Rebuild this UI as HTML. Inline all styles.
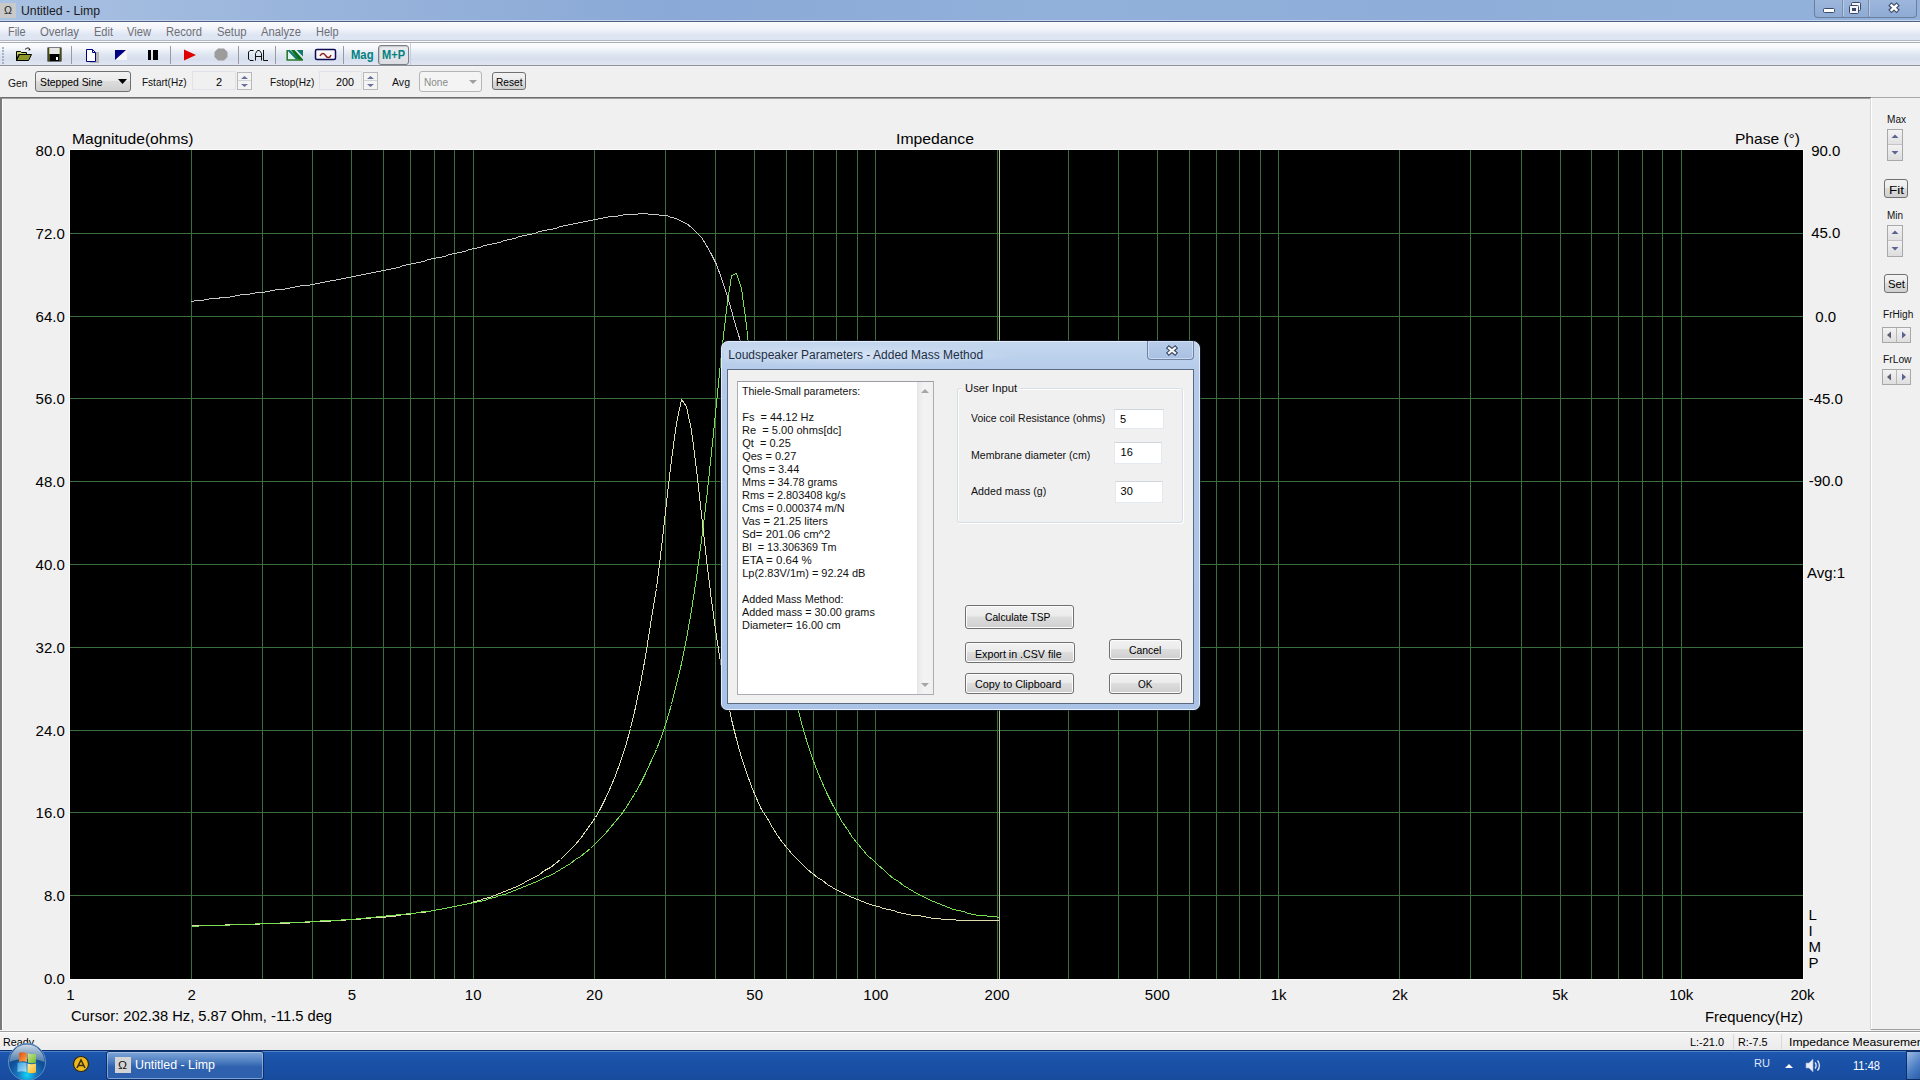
<!DOCTYPE html><html><head><meta charset="utf-8"><title>Untitled - Limp</title><style>
html,body{margin:0;padding:0;width:1920px;height:1080px;overflow:hidden;background:#f0f0f0;font-family:"Liberation Sans",sans-serif;}
div{box-sizing:border-box;}
</style></head><body>
<div style="position:absolute;left:0px;top:0px;width:1920px;height:20px;background:linear-gradient(90deg,#a9c1e2 0%,#9ab5dc 15%,#8aa9d6 35%,#91b0da 55%,#8eadd8 75%,#93b2db 100%)"></div>
<div style="position:absolute;left:0px;top:20px;width:1920px;height:1px;background:#c6d6ee"></div>
<div style="position:absolute;left:0px;top:21px;width:1920px;height:1px;background:#4f6183"></div>
<div style="position:absolute;left:0px;top:3px;width:16px;height:15px;background:#c9c9c9"></div>
<div style="position:absolute;left:4.00px;top:5.00px;font-size:11px;line-height:11px;font-family:'Liberation Sans',sans-serif;color:#222;white-space:pre;transform:scaleX(0.9728);transform-origin:0 0;">Ω</div>
<div style="position:absolute;left:21.00px;top:5.00px;font-size:12px;line-height:12px;font-family:'Liberation Sans',sans-serif;color:#1b1b1b;white-space:pre;transform:scaleX(1.0212);transform-origin:0 0;">Untitled - Limp</div>
<div style="position:absolute;left:1814px;top:0px;width:103px;height:18px;border:1px solid #6c7e9c;border-top:none;border-radius:0 0 4px 4px;background:linear-gradient(#9db7dc,#8eabd5)"></div>
<div style="position:absolute;left:1842px;top:0px;width:1px;height:17px;background:#7c8ea8"></div>
<div style="position:absolute;left:1843px;top:0px;width:1px;height:16px;background:#b8cae4"></div>
<div style="position:absolute;left:1868px;top:0px;width:1px;height:17px;background:#7c8ea8"></div>
<div style="position:absolute;left:1869px;top:0px;width:1px;height:16px;background:#b8cae4"></div>
<svg style="position:absolute;left:1814px;top:0px" width="106" height="17" viewBox="0 0 106 17">
<rect x="9.5" y="8.5" width="11" height="4" rx="1" fill="#fff" stroke="#3b4a66" stroke-width="1"/>
<rect x="37.5" y="2.5" width="9" height="8" rx="1" fill="#f4f6fa" stroke="#3b4a66" stroke-width="1"/>
<rect x="35.5" y="5.5" width="9" height="8" rx="1" fill="#f4f6fa" stroke="#3b4a66" stroke-width="1"/>
<rect x="38" y="8" width="4" height="3" fill="#3b4a66"/>
<path d="M77.5 5.5l5 4.5M82.5 5.5l-5 4.5" stroke="#3b4a66" stroke-width="4.6" stroke-linecap="square"/>
<path d="M77.5 5.5l5 4.5M82.5 5.5l-5 4.5" stroke="#fff" stroke-width="2.4" stroke-linecap="square"/>
</svg>
<div style="position:absolute;left:0px;top:22px;width:1920px;height:18px;background:linear-gradient(#fbfbfd 0%,#f3f5fa 35%,#dfe6f3 70%,#dde4f2 100%)"></div>
<div style="position:absolute;left:0px;top:40px;width:1920px;height:1px;background:#b4b8c2"></div>
<div style="position:absolute;left:0px;top:41px;width:1920px;height:1px;background:#fbfbfd"></div>
<div style="position:absolute;left:0px;top:42px;width:1920px;height:1px;background:#a9adb6"></div>
<div style="position:absolute;left:7.60px;top:26.00px;font-size:12px;line-height:12px;font-family:'Liberation Sans',sans-serif;color:#6d6f76;white-space:pre;transform:scaleX(0.9050);transform-origin:0 0;">File</div>
<div style="position:absolute;left:39.80px;top:26.00px;font-size:12px;line-height:12px;font-family:'Liberation Sans',sans-serif;color:#6d6f76;white-space:pre;transform:scaleX(0.9433);transform-origin:0 0;">Overlay</div>
<div style="position:absolute;left:93.50px;top:26.00px;font-size:12px;line-height:12px;font-family:'Liberation Sans',sans-serif;color:#6d6f76;white-space:pre;transform:scaleX(0.9188);transform-origin:0 0;">Edit</div>
<div style="position:absolute;left:127.30px;top:26.00px;font-size:12px;line-height:12px;font-family:'Liberation Sans',sans-serif;color:#6d6f76;white-space:pre;transform:scaleX(0.9304);transform-origin:0 0;">View</div>
<div style="position:absolute;left:166.00px;top:26.00px;font-size:12px;line-height:12px;font-family:'Liberation Sans',sans-serif;color:#6d6f76;white-space:pre;transform:scaleX(0.9306);transform-origin:0 0;">Record</div>
<div style="position:absolute;left:217.00px;top:26.00px;font-size:12px;line-height:12px;font-family:'Liberation Sans',sans-serif;color:#6d6f76;white-space:pre;transform:scaleX(0.9407);transform-origin:0 0;">Setup</div>
<div style="position:absolute;left:261.00px;top:26.00px;font-size:12px;line-height:12px;font-family:'Liberation Sans',sans-serif;color:#6d6f76;white-space:pre;transform:scaleX(0.9369);transform-origin:0 0;">Analyze</div>
<div style="position:absolute;left:316.00px;top:26.00px;font-size:12px;line-height:12px;font-family:'Liberation Sans',sans-serif;color:#6d6f76;white-space:pre;transform:scaleX(0.9116);transform-origin:0 0;">Help</div>
<div style="position:absolute;left:0px;top:43px;width:1920px;height:22px;background:linear-gradient(#fdfdfe 0%,#f6f8fb 20%,#dde5f1 55%,#d7dfee 75%,#e2e6f3 100%)"></div>
<div style="position:absolute;left:0px;top:65px;width:1920px;height:1px;background:#8f9199"></div>
<div style="position:absolute;left:0px;top:66px;width:1920px;height:1px;background:#f4f4f4"></div>
<div style="position:absolute;left:2px;top:47px;width:2px;height:2px;background:#a7b3c6"></div>
<div style="position:absolute;left:2px;top:50px;width:2px;height:2px;background:#a7b3c6"></div>
<div style="position:absolute;left:2px;top:53px;width:2px;height:2px;background:#a7b3c6"></div>
<div style="position:absolute;left:2px;top:56px;width:2px;height:2px;background:#a7b3c6"></div>
<div style="position:absolute;left:2px;top:59px;width:2px;height:2px;background:#a7b3c6"></div>
<div style="position:absolute;left:2px;top:62px;width:2px;height:2px;background:#a7b3c6"></div>
<svg style="position:absolute;left:15px;top:46px" width="18" height="16" viewBox="0 0 18 16">
<path d="M1.5 5.5h4l1 1h5v2h-8l-2 6z" fill="#c8d060" stroke="#000" stroke-width="1"/>
<path d="M1.5 14.5l3-6h12l-3 6z" fill="#8c9628" stroke="#000" stroke-width="1"/>
<path d="M10 3.5c2-2 4-2 5 0" fill="none" stroke="#000" stroke-width="1"/><path d="M14 2.5l1.5 1.5l-2 0.5z" fill="#000"/>
</svg>
<svg style="position:absolute;left:47px;top:47px" width="15" height="15" viewBox="0 0 15 15">
<rect x="0.5" y="0.5" width="14" height="14" fill="#000"/><rect x="3" y="1" width="9" height="6" fill="#8c9628"/>
<rect x="2" y="1" width="11" height="6" fill="#e6e6e6"/><rect x="3" y="9" width="9" height="5" fill="#000"/><rect x="9" y="10" width="2" height="3" fill="#fff"/>
<rect x="1.5" y="1" width="1" height="13" fill="#8c9628"/><rect x="12.5" y="1" width="1" height="13" fill="#8c9628"/>
</svg>
<div style="position:absolute;left:71px;top:46px;width:1px;height:18px;background:#9a9aa0"></div>
<svg style="position:absolute;left:85px;top:48px" width="16" height="15" viewBox="0 0 16 15">
<rect x="5" y="4" width="9" height="11" fill="#b4b4b4"/>
<path d="M1.5 1.5h6l3 3v9h-9z" fill="#fff" stroke="#000080" stroke-width="1"/><path d="M7.5 1.5v3h3" fill="none" stroke="#000080"/>
</svg>
<svg style="position:absolute;left:114px;top:49px" width="14" height="12" viewBox="0 0 14 12">
<rect x="2" y="1" width="11" height="10" fill="#f6f6f6"/><path d="M1 1h11l-11 10z" fill="#000080"/></svg>
<div style="position:absolute;left:148px;top:50px;width:3px;height:10px;background:#000"></div>
<div style="position:absolute;left:153px;top:50px;width:5px;height:10px;background:#000"></div>
<div style="position:absolute;left:170px;top:46px;width:1px;height:18px;background:#9a9aa0"></div>
<svg style="position:absolute;left:183px;top:49px" width="14" height="12" viewBox="0 0 14 12"><path d="M1 0.5L13 6L1 11.5z" fill="#e00000"/></svg>
<svg style="position:absolute;left:214px;top:48px" width="14" height="13" viewBox="0 0 14 13"><path d="M4 0.5h6l3.5 3.5v5l-3.5 3.5h-6l-3.5-3.5v-5z" fill="#9c9c9c"/></svg>
<div style="position:absolute;left:238px;top:46px;width:1px;height:18px;background:#9a9aa0"></div>
<svg style="position:absolute;left:240px;top:44px" width="40" height="20" viewBox="0 0 40 20">
<path d="M13.5 6.5h-3.5l-1.5 1.5v7l1.5 1.5h3.5M15.5 16.5v-7l2-3h2l2 3v7M15.5 12.5h6M23.5 6v10.5h4.5" fill="none" stroke="#111" stroke-width="1"/></svg>
<div style="position:absolute;left:275px;top:46px;width:1px;height:18px;background:#9a9aa0"></div>
<svg style="position:absolute;left:284px;top:47px" width="22" height="16" viewBox="0 0 22 16">
<path d="M3.5 4v8.5h11z" fill="#dcf6ee"/>
<path d="M3 3h3l10 9.5h-4z" fill="#127a6e"/>
<path d="M12.5 3h6.5v6.5z" fill="#127a6e"/>
<path d="M7 3h3.5l8.5 9.5v0.5h-4z" fill="#0b6e14"/>
<path d="M3.2 3v10h15.8" fill="none" stroke="#2a7a2a" stroke-width="1.6"/></svg>
<svg style="position:absolute;left:313px;top:47px" width="25" height="15" viewBox="0 0 25 15">
<rect x="2.5" y="2.5" width="20" height="10" rx="1.5" fill="#fbf6f8" stroke="#0c0c55" stroke-width="1.5"/>
<path d="M7 9c1-2 2-2.5 3-2.5s2 1 3 2.5s1.5 1.5 2.5 1.5s2-1 2.5-2.5" fill="none" stroke="#8c2222" stroke-width="1.5"/></svg>
<div style="position:absolute;left:343px;top:46px;width:1px;height:18px;background:#9a9aa0"></div>
<div style="position:absolute;left:350.50px;top:49.00px;font-size:12px;line-height:12px;font-family:'Liberation Sans',sans-serif;font-weight:bold;color:#008080;white-space:pre;transform:scaleX(0.9375);transform-origin:0 0;">Mag</div>
<div style="position:absolute;left:378px;top:45px;width:31px;height:20px;border:1px solid #7a7f86;border-radius:3px;background:linear-gradient(#e9ebee,#dcdee3);box-shadow:inset 1px 1px 1px rgba(0,0,0,0.15)"></div>
<div style="position:absolute;left:382.00px;top:49.00px;font-size:12px;line-height:12px;font-family:'Liberation Sans',sans-serif;font-weight:bold;color:#008080;white-space:pre;transform:scaleX(0.9197);transform-origin:0 0;">M+P</div>
<div style="position:absolute;left:410px;top:43px;width:1px;height:22px;background:#c8ccd6"></div>
<div style="position:absolute;left:8.00px;top:78.00px;font-size:11px;line-height:11px;font-family:'Liberation Sans',sans-serif;color:#111;white-space:pre;transform:scaleX(0.9379);transform-origin:0 0;">Gen</div>
<div style="position:absolute;left:35px;top:71px;width:96px;height:21px;border:1px solid #707070;border-radius:3px;background:linear-gradient(#f2f2f2 0%,#ebebeb 45%,#dddddd 50%,#cfcfcf 100%)"></div>
<div style="position:absolute;left:39.50px;top:77.00px;font-size:11px;line-height:11px;font-family:'Liberation Sans',sans-serif;color:#000;white-space:pre;transform:scaleX(0.9462);transform-origin:0 0;">Stepped Sine</div>
<svg style="position:absolute;left:118px;top:79px" width="10" height="6"><path d="M0 0h9l-4.5 5z" fill="#000"/></svg>
<div style="position:absolute;left:141.50px;top:77.00px;font-size:11px;line-height:11px;font-family:'Liberation Sans',sans-serif;color:#111;white-space:pre;transform:scaleX(0.9103);transform-origin:0 0;">Fstart(Hz)</div>
<div style="position:absolute;left:192px;top:71px;width:44px;height:19px;border:1px solid #e2e3ea;background:#f0f0f0"></div>
<div style="position:absolute;left:216.00px;top:77.00px;font-size:11px;line-height:11px;font-family:'Liberation Sans',sans-serif;color:#000;white-space:pre;">2</div>
<div style="position:absolute;left:237px;top:72px;width:15px;height:18px;border:1px solid #b9b9b9;background:#f4f4f4"></div>
<div style="position:absolute;left:238px;top:80px;width:13px;height:1px;background:#d4d4d4"></div>
<svg style="position:absolute;left:240px;top:75px" width="9" height="13"><path d="M1 4h7l-3.5-3z" fill="#6b6f9c"/><path d="M1 9h7l-3.5 3z" fill="#6b6f9c"/></svg>
<div style="position:absolute;left:269.80px;top:77.00px;font-size:11px;line-height:11px;font-family:'Liberation Sans',sans-serif;color:#111;white-space:pre;transform:scaleX(0.9217);transform-origin:0 0;">Fstop(Hz)</div>
<div style="position:absolute;left:319px;top:71px;width:43px;height:19px;border:1px solid #e2e3ea;background:#f0f0f0"></div>
<div style="position:absolute;left:336.00px;top:77.00px;font-size:11px;line-height:11px;font-family:'Liberation Sans',sans-serif;color:#000;white-space:pre;transform:scaleX(0.9807);transform-origin:0 0;">200</div>
<div style="position:absolute;left:363px;top:72px;width:15px;height:18px;border:1px solid #b9b9b9;background:#f4f4f4"></div>
<div style="position:absolute;left:364px;top:80px;width:13px;height:1px;background:#d4d4d4"></div>
<svg style="position:absolute;left:366px;top:75px" width="9" height="13"><path d="M1 4h7l-3.5-3z" fill="#6b6f9c"/><path d="M1 9h7l-3.5 3z" fill="#6b6f9c"/></svg>
<div style="position:absolute;left:392.00px;top:77.00px;font-size:11px;line-height:11px;font-family:'Liberation Sans',sans-serif;color:#111;white-space:pre;transform:scaleX(0.9597);transform-origin:0 0;">Avg</div>
<div style="position:absolute;left:419px;top:71px;width:63px;height:21px;border:1px solid #b5b5b5;border-radius:3px;background:#f4f4f4"></div>
<div style="position:absolute;left:424.00px;top:77.00px;font-size:11px;line-height:11px;font-family:'Liberation Sans',sans-serif;color:#8a8a8a;white-space:pre;transform:scaleX(0.9126);transform-origin:0 0;">None</div>
<svg style="position:absolute;left:469px;top:80px" width="9" height="6"><path d="M0 0h8l-4 4z" fill="#a0a0a0"/></svg>
<div style="position:absolute;left:492px;top:72px;width:34px;height:18px;border:1px solid #707070;border-radius:3px;background:linear-gradient(#f2f2f2 0%,#ebebeb 45%,#dddddd 50%,#cfcfcf 100%)"></div>
<div style="position:absolute;left:495.50px;top:77.00px;font-size:11px;line-height:11px;font-family:'Liberation Sans',sans-serif;color:#000;white-space:pre;transform:scaleX(0.9222);transform-origin:0 0;">Reset</div>
<div style="position:absolute;left:0px;top:97px;width:1871px;height:1px;background:#6f6f6f"></div>
<div style="position:absolute;left:0px;top:98px;width:1871px;height:1px;background:#a0a0a0"></div>
<div style="position:absolute;left:0px;top:97px;width:2px;height:934px;background:#7a7a7a"></div>
<div style="position:absolute;left:2px;top:99px;width:1px;height:930px;background:#fff"></div>
<svg style="position:absolute;left:0;top:0" width="1920" height="1080" shape-rendering="crispEdges">
<rect x="69" y="149" width="1735" height="831" fill="#fbfbfb"/>
<rect x="70" y="150" width="1733" height="829" fill="#000"/>
<path d="M191.5 150V979M262.5 150V979M312.5 150V979M351.5 150V979M383.5 150V979M410.5 150V979M434.5 150V979M454.5 150V979M473.5 150V979M594.5 150V979M665.5 150V979M715.5 150V979M754.5 150V979M786.5 150V979M813.5 150V979M836.5 150V979M857.5 150V979M875.5 150V979M997.5 150V979M1068.5 150V979M1118.5 150V979M1157.5 150V979M1189.5 150V979M1216.5 150V979M1239.5 150V979M1260.5 150V979M1278.5 150V979M1399.5 150V979M1470.5 150V979M1521.5 150V979M1560.5 150V979M1591.5 150V979M1618.5 150V979M1642.5 150V979M1662.5 150V979M1681.5 150V979M70 895.5H1803M70 812.5H1803M70 730.5H1803M70 647.5H1803M70 564.5H1803M70 481.5H1803M70 398.5H1803M70 316.5H1803M70 233.5H1803" stroke="#3a6e3a" stroke-width="1" fill="none"/>
<polyline points="191.5,301.5 196.5,300.5 201.5,300.5 206.5,299.5 211.5,298.5 216.5,298.5 222.5,297.5 227.5,297.5 232.5,296.5 237.5,295.5 242.5,294.5 247.5,294.5 252.5,293.5 257.5,292.5 262.5,292.5 267.5,291.5 272.5,290.5 277.5,289.5 282.5,289.5 287.5,288.5 292.5,287.5 297.5,286.5 302.5,285.5 307.5,285.5 312.5,284.5 317.5,283.5 322.5,282.5 327.5,281.5 333.5,280.5 338.5,279.5 343.5,278.5 348.5,277.5 353.5,276.5 358.5,275.5 363.5,274.5 368.5,273.5 373.5,272.5 378.5,271.5 383.5,270.5 388.5,269.5 393.5,268.5 398.5,267.5 403.5,265.5 408.5,264.5 413.5,263.5 418.5,262.5 423.5,261.5 428.5,259.5 433.5,258.5 439.5,257.5 444.5,256.5 449.5,254.5 454.5,253.5 459.5,252.5 464.5,251.5 469.5,249.5 474.5,248.5 479.5,247.5 484.5,245.5 489.5,244.5 494.5,243.5 499.5,242.5 504.5,240.5 509.5,239.5 514.5,238.5 519.5,236.5 524.5,235.5 529.5,234.5 534.5,233.5 539.5,231.5 544.5,230.5 550.5,229.5 555.5,228.5 560.5,226.5 565.5,225.5 570.5,224.5 575.5,223.5 580.5,222.5 585.5,221.5 590.5,220.5 595.5,219.5 600.5,218.5 605.5,217.5 610.5,216.5 615.5,216.5 620.5,215.5 625.5,214.5 630.5,214.5 635.5,214.5 640.5,213.5 645.5,213.5 650.5,214.5 656.5,214.5 661.5,215.5 666.5,215.5 671.5,217.5 676.5,218.5 681.5,221.5 686.5,223.5 691.5,227.5 696.5,232.5 701.5,237.5 706.5,245.5 711.5,254.5 716.5,264.5 721.5,278.5 726.5,293.5 731.5,310.5 736.5,328.5 741.5,344.5 746.5,358.5 751.5,369.5 756.5,377.5 761.5,383.5 767.5,387.5 772.5,389.5 777.5,390.5 782.5,390.5 787.5,390.5 792.5,389.5 797.5,389.5 802.5,388.5 807.5,388.5 812.5,387.5 817.5,387.5 822.5,387.5 827.5,387.5 832.5,387.5 837.5,387.5 842.5,387.5 847.5,387.5 852.5,387.5 857.5,388.5 862.5,388.5 867.5,388.5 873.5,389.5 878.5,389.5 883.5,390.5 888.5,390.5 893.5,390.5 898.5,391.5 903.5,391.5 908.5,391.5 913.5,391.5 918.5,390.5 923.5,390.5 928.5,389.5 933.5,388.5 938.5,387.5 943.5,386.5 948.5,384.5 953.5,382.5 958.5,380.5 963.5,377.5 968.5,374.5 973.5,370.5 978.5,366.5 984.5,361.5 989.5,356.5 994.5,350.5 999.5,344.5" stroke="#c8c8c8" stroke-width="1" fill="none"/>
<polyline points="191.5,925.5 196.5,925.5 201.5,925.5 206.5,925.5 211.5,925.5 216.5,925.5 222.5,925.5 227.5,924.5 232.5,924.5 237.5,924.5 242.5,924.5 247.5,924.5 252.5,924.5 257.5,924.5 262.5,923.5 267.5,923.5 272.5,923.5 277.5,923.5 282.5,923.5 287.5,923.5 292.5,922.5 297.5,922.5 302.5,922.5 307.5,922.5 312.5,921.5 317.5,921.5 322.5,921.5 327.5,921.5 333.5,920.5 338.5,920.5 343.5,920.5 348.5,919.5 353.5,919.5 358.5,919.5 363.5,918.5 368.5,918.5 373.5,917.5 378.5,917.5 383.5,917.5 388.5,916.5 393.5,916.5 398.5,915.5 403.5,914.5 408.5,914.5 413.5,913.5 418.5,912.5 423.5,912.5 428.5,911.5 433.5,910.5 439.5,909.5 444.5,908.5 449.5,907.5 454.5,906.5 459.5,905.5 464.5,904.5 469.5,903.5 474.5,901.5 479.5,900.5 484.5,898.5 489.5,897.5 494.5,895.5 499.5,893.5 504.5,891.5 509.5,889.5 514.5,887.5 519.5,885.5 524.5,882.5 529.5,879.5 534.5,877.5 539.5,874.5 544.5,870.5 550.5,867.5 555.5,863.5 560.5,859.5 565.5,854.5 570.5,849.5 575.5,844.5 580.5,838.5 585.5,831.5 590.5,824.5 595.5,817.5 600.5,808.5 605.5,798.5 610.5,787.5 615.5,775.5 620.5,761.5 625.5,746.5 630.5,728.5 635.5,707.5 640.5,683.5 645.5,656.5 650.5,624.5 656.5,588.5 661.5,547.5 666.5,502.5 671.5,459.5 676.5,423.5 681.5,399.5 686.5,406.5 691.5,430.5 696.5,469.5 701.5,514.5 706.5,559.5 711.5,600.5 716.5,636.5 721.5,668.5 726.5,695.5 731.5,719.5 736.5,739.5 741.5,757.5 746.5,772.5 751.5,786.5 756.5,798.5 761.5,809.5 767.5,818.5 772.5,827.5 777.5,835.5 782.5,842.5 787.5,848.5 792.5,854.5 797.5,859.5 802.5,864.5 807.5,869.5 812.5,873.5 817.5,877.5 822.5,880.5 827.5,884.5 832.5,887.5 837.5,890.5 842.5,892.5 847.5,895.5 852.5,897.5 857.5,899.5 862.5,901.5 867.5,903.5 873.5,905.5 878.5,906.5 883.5,908.5 888.5,909.5 893.5,910.5 898.5,912.5 903.5,913.5 908.5,914.5 913.5,915.5 918.5,915.5 923.5,916.5 928.5,917.5 933.5,918.5 938.5,918.5 943.5,919.5 948.5,919.5 953.5,919.5 958.5,920.5 963.5,920.5 968.5,920.5 973.5,920.5 978.5,920.5 984.5,920.5 989.5,920.5 994.5,920.5 999.5,920.5" stroke="#dedeb0" stroke-width="1" fill="none"/>
<polyline points="191.5,926.5 196.5,926.5 201.5,925.5 206.5,925.5 211.5,925.5 216.5,925.5 222.5,925.5 227.5,925.5 232.5,924.5 237.5,924.5 242.5,924.5 247.5,924.5 252.5,924.5 257.5,923.5 262.5,923.5 267.5,923.5 272.5,923.5 277.5,923.5 282.5,922.5 287.5,922.5 292.5,922.5 297.5,922.5 302.5,922.5 307.5,921.5 312.5,921.5 317.5,921.5 322.5,920.5 327.5,920.5 333.5,920.5 338.5,920.5 343.5,919.5 348.5,919.5 353.5,919.5 358.5,918.5 363.5,918.5 368.5,917.5 373.5,917.5 378.5,916.5 383.5,916.5 388.5,915.5 393.5,915.5 398.5,914.5 403.5,914.5 408.5,913.5 413.5,913.5 418.5,912.5 423.5,911.5 428.5,911.5 433.5,910.5 439.5,909.5 444.5,908.5 449.5,907.5 454.5,906.5 459.5,905.5 464.5,904.5 469.5,903.5 474.5,902.5 479.5,901.5 484.5,900.5 489.5,898.5 494.5,897.5 499.5,895.5 504.5,894.5 509.5,892.5 514.5,890.5 519.5,888.5 524.5,886.5 529.5,884.5 534.5,882.5 539.5,880.5 544.5,877.5 550.5,875.5 555.5,872.5 560.5,869.5 565.5,866.5 570.5,863.5 575.5,859.5 580.5,856.5 585.5,852.5 590.5,848.5 595.5,843.5 600.5,838.5 605.5,833.5 610.5,827.5 615.5,821.5 620.5,815.5 625.5,808.5 630.5,800.5 635.5,792.5 640.5,783.5 645.5,773.5 650.5,762.5 656.5,749.5 661.5,736.5 666.5,721.5 671.5,704.5 676.5,684.5 681.5,663.5 686.5,638.5 691.5,610.5 696.5,577.5 701.5,540.5 706.5,499.5 711.5,452.5 716.5,403.5 721.5,353.5 726.5,309.5 731.5,275.5 736.5,273.5 741.5,288.5 746.5,325.5 751.5,374.5 756.5,426.5 761.5,477.5 767.5,523.5 772.5,565.5 777.5,601.5 782.5,633.5 787.5,661.5 792.5,685.5 797.5,707.5 802.5,726.5 807.5,743.5 812.5,758.5 817.5,771.5 822.5,783.5 827.5,794.5 832.5,804.5 837.5,813.5 842.5,822.5 847.5,829.5 852.5,837.5 857.5,843.5 862.5,849.5 867.5,855.5 873.5,860.5 878.5,865.5 883.5,869.5 888.5,874.5 893.5,878.5 898.5,881.5 903.5,885.5 908.5,888.5 913.5,891.5 918.5,894.5 923.5,896.5 928.5,899.5 933.5,901.5 938.5,903.5 943.5,905.5 948.5,907.5 953.5,909.5 958.5,910.5 963.5,911.5 968.5,913.5 973.5,914.5 978.5,915.5 984.5,915.5 989.5,916.5 994.5,916.5 999.5,917.5" stroke="#78e050" stroke-width="1" fill="none"/>
<path d="M999.5 150V979" stroke="#b4c08c" stroke-width="1"/>
</svg>
<div style="position:absolute;left:35.61px;top:143.00px;font-size:15px;line-height:15px;font-family:'Liberation Sans',sans-serif;color:#000;white-space:pre;">80.0</div>
<div style="position:absolute;left:35.61px;top:226.00px;font-size:15px;line-height:15px;font-family:'Liberation Sans',sans-serif;color:#000;white-space:pre;">72.0</div>
<div style="position:absolute;left:35.61px;top:309.00px;font-size:15px;line-height:15px;font-family:'Liberation Sans',sans-serif;color:#000;white-space:pre;">64.0</div>
<div style="position:absolute;left:35.61px;top:391.00px;font-size:15px;line-height:15px;font-family:'Liberation Sans',sans-serif;color:#000;white-space:pre;">56.0</div>
<div style="position:absolute;left:35.61px;top:474.00px;font-size:15px;line-height:15px;font-family:'Liberation Sans',sans-serif;color:#000;white-space:pre;">48.0</div>
<div style="position:absolute;left:35.61px;top:557.00px;font-size:15px;line-height:15px;font-family:'Liberation Sans',sans-serif;color:#000;white-space:pre;">40.0</div>
<div style="position:absolute;left:35.61px;top:640.00px;font-size:15px;line-height:15px;font-family:'Liberation Sans',sans-serif;color:#000;white-space:pre;">32.0</div>
<div style="position:absolute;left:35.61px;top:723.00px;font-size:15px;line-height:15px;font-family:'Liberation Sans',sans-serif;color:#000;white-space:pre;">24.0</div>
<div style="position:absolute;left:35.61px;top:805.00px;font-size:15px;line-height:15px;font-family:'Liberation Sans',sans-serif;color:#000;white-space:pre;">16.0</div>
<div style="position:absolute;left:43.95px;top:888.00px;font-size:15px;line-height:15px;font-family:'Liberation Sans',sans-serif;color:#000;white-space:pre;">8.0</div>
<div style="position:absolute;left:43.95px;top:971.00px;font-size:15px;line-height:15px;font-family:'Liberation Sans',sans-serif;color:#000;white-space:pre;">0.0</div>
<div style="position:absolute;left:1811.20px;top:143.00px;font-size:15px;line-height:15px;font-family:'Liberation Sans',sans-serif;color:#000;white-space:pre;">90.0</div>
<div style="position:absolute;left:1811.20px;top:225.00px;font-size:15px;line-height:15px;font-family:'Liberation Sans',sans-serif;color:#000;white-space:pre;">45.0</div>
<div style="position:absolute;left:1815.37px;top:309.00px;font-size:15px;line-height:15px;font-family:'Liberation Sans',sans-serif;color:#000;white-space:pre;">0.0</div>
<div style="position:absolute;left:1808.70px;top:391.00px;font-size:15px;line-height:15px;font-family:'Liberation Sans',sans-serif;color:#000;white-space:pre;">-45.0</div>
<div style="position:absolute;left:1808.70px;top:473.00px;font-size:15px;line-height:15px;font-family:'Liberation Sans',sans-serif;color:#000;white-space:pre;">-90.0</div>
<div style="position:absolute;left:66.33px;top:987.00px;font-size:15px;line-height:15px;font-family:'Liberation Sans',sans-serif;color:#000;white-space:pre;">1</div>
<div style="position:absolute;left:187.55px;top:987.00px;font-size:15px;line-height:15px;font-family:'Liberation Sans',sans-serif;color:#000;white-space:pre;">2</div>
<div style="position:absolute;left:347.80px;top:987.00px;font-size:15px;line-height:15px;font-family:'Liberation Sans',sans-serif;color:#000;white-space:pre;">5</div>
<div style="position:absolute;left:464.85px;top:987.00px;font-size:15px;line-height:15px;font-family:'Liberation Sans',sans-serif;color:#000;white-space:pre;">10</div>
<div style="position:absolute;left:586.07px;top:987.00px;font-size:15px;line-height:15px;font-family:'Liberation Sans',sans-serif;color:#000;white-space:pre;">20</div>
<div style="position:absolute;left:746.32px;top:987.00px;font-size:15px;line-height:15px;font-family:'Liberation Sans',sans-serif;color:#000;white-space:pre;">50</div>
<div style="position:absolute;left:863.37px;top:987.00px;font-size:15px;line-height:15px;font-family:'Liberation Sans',sans-serif;color:#000;white-space:pre;">100</div>
<div style="position:absolute;left:984.60px;top:987.00px;font-size:15px;line-height:15px;font-family:'Liberation Sans',sans-serif;color:#000;white-space:pre;">200</div>
<div style="position:absolute;left:1144.85px;top:987.00px;font-size:15px;line-height:15px;font-family:'Liberation Sans',sans-serif;color:#000;white-space:pre;">500</div>
<div style="position:absolute;left:1270.66px;top:987.00px;font-size:15px;line-height:15px;font-family:'Liberation Sans',sans-serif;color:#000;white-space:pre;">1k</div>
<div style="position:absolute;left:1391.88px;top:987.00px;font-size:15px;line-height:15px;font-family:'Liberation Sans',sans-serif;color:#000;white-space:pre;">2k</div>
<div style="position:absolute;left:1552.13px;top:987.00px;font-size:15px;line-height:15px;font-family:'Liberation Sans',sans-serif;color:#000;white-space:pre;">5k</div>
<div style="position:absolute;left:1669.18px;top:987.00px;font-size:15px;line-height:15px;font-family:'Liberation Sans',sans-serif;color:#000;white-space:pre;">10k</div>
<div style="position:absolute;left:1790.41px;top:987.00px;font-size:15px;line-height:15px;font-family:'Liberation Sans',sans-serif;color:#000;white-space:pre;">20k</div>
<div style="position:absolute;left:72.00px;top:131.00px;font-size:15px;line-height:15px;font-family:'Liberation Sans',sans-serif;color:#000;white-space:pre;transform:scaleX(1.0409);transform-origin:0 0;">Magnitude(ohms)</div>
<div style="position:absolute;left:896.00px;top:131.00px;font-size:15px;line-height:15px;font-family:'Liberation Sans',sans-serif;color:#000;white-space:pre;transform:scaleX(1.0510);transform-origin:0 0;">Impedance</div>
<div style="position:absolute;left:1735.00px;top:131.00px;font-size:15px;line-height:15px;font-family:'Liberation Sans',sans-serif;color:#000;white-space:pre;transform:scaleX(1.0368);transform-origin:0 0;">Phase (°)</div>
<div style="position:absolute;left:1807.00px;top:565.00px;font-size:15px;line-height:15px;font-family:'Liberation Sans',sans-serif;color:#000;white-space:pre;">Avg:1</div>
<div style="position:absolute;left:1808.50px;top:907.00px;font-size:15px;line-height:15px;font-family:'Liberation Sans',sans-serif;color:#000;white-space:pre;">L</div>
<div style="position:absolute;left:1808.50px;top:923.00px;font-size:15px;line-height:15px;font-family:'Liberation Sans',sans-serif;color:#000;white-space:pre;">I</div>
<div style="position:absolute;left:1808.50px;top:939.00px;font-size:15px;line-height:15px;font-family:'Liberation Sans',sans-serif;color:#000;white-space:pre;">M</div>
<div style="position:absolute;left:1808.50px;top:955.00px;font-size:15px;line-height:15px;font-family:'Liberation Sans',sans-serif;color:#000;white-space:pre;">P</div>
<div style="position:absolute;left:70.50px;top:1008.00px;font-size:15px;line-height:15px;font-family:'Liberation Sans',sans-serif;color:#000;white-space:pre;transform:scaleX(0.9792);transform-origin:0 0;">Cursor: 202.38 Hz, 5.87 Ohm, -11.5 deg</div>
<div style="position:absolute;left:1705.00px;top:1009.00px;font-size:15px;line-height:15px;font-family:'Liberation Sans',sans-serif;color:#000;white-space:pre;transform:scaleX(0.9879);transform-origin:0 0;">Frequency(Hz)</div>
<div style="position:absolute;left:1871px;top:97px;width:49px;height:1px;background:#a8a8a8"></div>
<div style="position:absolute;left:1870px;top:98px;width:1px;height:932px;background:#d8d8d8"></div>
<div style="position:absolute;left:1871px;top:98px;width:1px;height:932px;background:#fff"></div>
<div style="position:absolute;left:1871px;top:1029px;width:49px;height:1px;background:#a0a0a0"></div>
<div style="position:absolute;left:1887.00px;top:115.00px;font-size:10px;line-height:10px;font-family:'Liberation Sans',sans-serif;color:#111;white-space:pre;transform:scaleX(1.0057);transform-origin:0 0;">Max</div>
<div style="position:absolute;left:1887px;top:129px;width:16px;height:32px;border:1px solid #a8a8a8;background:#f7f7f7"></div>
<div style="position:absolute;left:1888px;top:130px;width:14px;height:14px;background:linear-gradient(#f3f3f3,#e1e1e1)"></div>
<div style="position:absolute;left:1888px;top:145px;width:14px;height:15px;background:linear-gradient(#f3f3f3,#dcdcdc)"></div>
<div style="position:absolute;left:1888px;top:144px;width:14px;height:1px;background:#c4c4c4"></div>
<svg style="position:absolute;left:1891px;top:134px" width="9" height="22"><path d="M0.5 4h7l-3.5-3.5z" fill="#5c6394"/><path d="M0.5 17h7l-3.5 3.5z" fill="#5c6394"/></svg>
<div style="position:absolute;left:1884px;top:179px;width:24px;height:19px;border:1px solid #707070;border-radius:3px;background:linear-gradient(#f3f3f3 0%,#ececec 45%,#dddddd 50%,#d0d0d0 100%)"></div>
<div style="position:absolute;left:1888.50px;top:185.00px;font-size:11px;line-height:11px;font-family:'Liberation Sans',sans-serif;color:#000;white-space:pre;transform:scaleX(1.2276);transform-origin:0 0;">Fit</div>
<div style="position:absolute;left:1887.00px;top:211.00px;font-size:10px;line-height:10px;font-family:'Liberation Sans',sans-serif;color:#111;white-space:pre;transform:scaleX(0.9929);transform-origin:0 0;">Min</div>
<div style="position:absolute;left:1887px;top:225px;width:16px;height:32px;border:1px solid #a8a8a8;background:#f7f7f7"></div>
<div style="position:absolute;left:1888px;top:226px;width:14px;height:14px;background:linear-gradient(#f3f3f3,#e1e1e1)"></div>
<div style="position:absolute;left:1888px;top:241px;width:14px;height:15px;background:linear-gradient(#f3f3f3,#dcdcdc)"></div>
<div style="position:absolute;left:1888px;top:240px;width:14px;height:1px;background:#c4c4c4"></div>
<svg style="position:absolute;left:1891px;top:230px" width="9" height="22"><path d="M0.5 4h7l-3.5-3.5z" fill="#5c6394"/><path d="M0.5 17h7l-3.5 3.5z" fill="#5c6394"/></svg>
<div style="position:absolute;left:1884px;top:274px;width:24px;height:19px;border:1px solid #707070;border-radius:3px;background:linear-gradient(#f3f3f3 0%,#ececec 45%,#dddddd 50%,#d0d0d0 100%)"></div>
<div style="position:absolute;left:1887.50px;top:279.00px;font-size:11px;line-height:11px;font-family:'Liberation Sans',sans-serif;color:#000;white-space:pre;transform:scaleX(1.0296);transform-origin:0 0;">Set</div>
<div style="position:absolute;left:1882.70px;top:310.00px;font-size:10px;line-height:10px;font-family:'Liberation Sans',sans-serif;color:#111;white-space:pre;transform:scaleX(1.0098);transform-origin:0 0;">FrHigh</div>
<div style="position:absolute;left:1882px;top:327px;width:29px;height:16px;border:1px solid #a8a8a8;background:#f7f7f7"></div>
<div style="position:absolute;left:1883px;top:328px;width:13px;height:14px;background:linear-gradient(#f3f3f3,#dedede)"></div>
<div style="position:absolute;left:1897px;top:328px;width:13px;height:14px;background:linear-gradient(#f3f3f3,#dedede)"></div>
<div style="position:absolute;left:1896px;top:328px;width:1px;height:14px;background:#b8b8b8"></div>
<svg style="position:absolute;left:1882px;top:327px" width="29" height="16"><path d="M9 4.5v7l-4-3.5z" fill="#5c5c6c"/><path d="M20 4.5v7l4-3.5z" fill="#5c6394"/></svg>
<div style="position:absolute;left:1882.70px;top:355.00px;font-size:10px;line-height:10px;font-family:'Liberation Sans',sans-serif;color:#111;white-space:pre;transform:scaleX(1.0258);transform-origin:0 0;">FrLow</div>
<div style="position:absolute;left:1882px;top:369px;width:29px;height:16px;border:1px solid #a8a8a8;background:#f7f7f7"></div>
<div style="position:absolute;left:1883px;top:370px;width:13px;height:14px;background:linear-gradient(#f3f3f3,#dedede)"></div>
<div style="position:absolute;left:1897px;top:370px;width:13px;height:14px;background:linear-gradient(#f3f3f3,#dedede)"></div>
<div style="position:absolute;left:1896px;top:370px;width:1px;height:14px;background:#b8b8b8"></div>
<svg style="position:absolute;left:1882px;top:369px" width="29" height="16"><path d="M9 4.5v7l-4-3.5z" fill="#5c5c6c"/><path d="M20 4.5v7l4-3.5z" fill="#5c6394"/></svg>
<div style="position:absolute;left:0px;top:1030px;width:1871px;height:1px;background:#f8f8f8"></div>
<div style="position:absolute;left:0px;top:1031px;width:1920px;height:1px;background:#a0a0a0"></div>
<div style="position:absolute;left:0px;top:1032px;width:1920px;height:18px;background:linear-gradient(#f4f4f4,#ececec)"></div>
<div style="position:absolute;left:0px;top:1032px;width:1920px;height:1px;background:#fff"></div>
<div style="position:absolute;left:2.80px;top:1037.00px;font-size:11px;line-height:11px;font-family:'Liberation Sans',sans-serif;color:#000;white-space:pre;transform:scaleX(0.9749);transform-origin:0 0;">Ready</div>
<div style="position:absolute;left:1733px;top:1034px;width:1px;height:15px;background:#d9d9d9"></div>
<div style="position:absolute;left:1781px;top:1034px;width:1px;height:15px;background:#d9d9d9"></div>
<div style="position:absolute;left:1690.00px;top:1037.00px;font-size:11px;line-height:11px;font-family:'Liberation Sans',sans-serif;color:#000;white-space:pre;transform:scaleX(0.9928);transform-origin:0 0;">L:-21.0</div>
<div style="position:absolute;left:1738.00px;top:1037.00px;font-size:11px;line-height:11px;font-family:'Liberation Sans',sans-serif;color:#000;white-space:pre;transform:scaleX(0.9848);transform-origin:0 0;">R:-7.5</div>
<div style="position:absolute;left:1789.00px;top:1037.00px;font-size:11px;line-height:11px;font-family:'Liberation Sans',sans-serif;color:#000;white-space:pre;transform:scaleX(1.1063);transform-origin:0 0;">Impedance Measurement</div>
<div style="position:absolute;left:0px;top:1050px;width:1920px;height:30px;background:linear-gradient(#1e58b0 0%,#1a52a8 40%,#174b9e 100%)"></div>
<div style="position:absolute;left:0px;top:1050px;width:1920px;height:1px;background:#0b2f6c"></div>
<div style="position:absolute;left:0px;top:1051px;width:1920px;height:1px;background:#4f82c8"></div>
<svg style="position:absolute;left:6px;top:1042px" width="44" height="38" viewBox="0 0 44 38">
<defs><radialGradient id="orb" cx="50%" cy="85%" r="70%"><stop offset="0" stop-color="#10d8f8"/><stop offset="0.35" stop-color="#1a78c0"/><stop offset="0.7" stop-color="#0e4f98"/><stop offset="1" stop-color="#1d4d88"/></radialGradient>
<linearGradient id="orbhl" x1="0" y1="0" x2="0" y2="1"><stop offset="0" stop-color="#d8e4ee" stop-opacity="0.95"/><stop offset="1" stop-color="#8fb0cc" stop-opacity="0.5"/></linearGradient>
<linearGradient id="fr" x1="0" y1="0" x2="1" y2="1"><stop offset="0" stop-color="#e04a18"/><stop offset="1" stop-color="#f8b040"/></linearGradient>
<linearGradient id="fg" x1="0" y1="0" x2="1" y2="1"><stop offset="0" stop-color="#c8e890"/><stop offset="1" stop-color="#70b830"/></linearGradient>
<linearGradient id="fb" x1="0" y1="0" x2="1" y2="1"><stop offset="0" stop-color="#3aa0e0"/><stop offset="1" stop-color="#b0e0f8"/></linearGradient>
<linearGradient id="fy" x1="0" y1="0" x2="1" y2="1"><stop offset="0" stop-color="#fff0a0"/><stop offset="1" stop-color="#f8b020"/></linearGradient></defs>
<circle cx="21" cy="20" r="18.5" fill="url(#orb)" stroke="#5f8fc8" stroke-width="1"/>
<path d="M3.5 20a17.5 17.5 0 0 1 35 0c-4 -2 -10 -3 -17.5 -3s-13.5 1 -17.5 3z" fill="url(#orbhl)"/>
<path d="M13 11q4 -1.5 8 0v9q-4 -1.5 -8 0z" fill="url(#fr)"/>
<path d="M22 11.5q4 1.5 8 0v9q-4 1.5 -8 0z" fill="url(#fg)"/>
<path d="M11.5 21q4 -1.5 9 0v9q-5 -1.5 -9 0z" fill="url(#fb)"/>
<path d="M21.5 21.5q4 1.5 8.5 0v9q-4.5 1.5 -8.5 0z" fill="url(#fy)"/>
</svg>
<svg style="position:absolute;left:72px;top:1055px" width="18" height="18" viewBox="0 0 18 18">
<circle cx="9" cy="9" r="7.5" fill="#f0b820" stroke="#2a2a10" stroke-width="1.2"/><path d="M5 13l4-8l4 8M6.5 10.5h5" fill="none" stroke="#3a3010" stroke-width="1.6"/></svg>
<div style="position:absolute;left:106px;top:1051px;width:158px;height:29px;border:1px solid #0d2f68;border-radius:3px;background:linear-gradient(#7fa6d8 0%,#4f7fc0 35%,#2e62ae 55%,#2d5fac 100%);box-shadow:inset 0 0 0 1px rgba(190,215,245,0.55)"></div>
<div style="position:absolute;left:115px;top:1057px;width:16px;height:16px;background:#d4d4d4"></div>
<div style="position:absolute;left:118.00px;top:1061.00px;font-size:10px;line-height:10px;font-family:'Liberation Sans',sans-serif;color:#111;white-space:pre;transform:scaleX(1.2039);transform-origin:0 0;">Ω</div>
<div style="position:absolute;left:135.00px;top:1059.00px;font-size:12px;line-height:12px;font-family:'Liberation Sans',sans-serif;color:#fff;white-space:pre;transform:scaleX(1.0341);transform-origin:0 0;">Untitled - Limp</div>
<div style="position:absolute;left:1754.00px;top:1058.00px;font-size:11px;line-height:11px;font-family:'Liberation Sans',sans-serif;color:#dbe6f6;white-space:pre;transform:scaleX(1.0070);transform-origin:0 0;">RU</div>
<svg style="position:absolute;left:1785px;top:1063px" width="9" height="6"><path d="M0 5h8l-4-4z" fill="#fff"/></svg>
<svg style="position:absolute;left:1805px;top:1058px" width="16" height="15" viewBox="0 0 16 15">
<path d="M1 5h3l4-4v13l-4-4h-3z" fill="#e8eef8" stroke="#9aaccc" stroke-width="0.6"/><path d="M10 4.5c1.5 1.5 1.5 4.5 0 6M12.5 2.5c2.5 2.5 2.5 7.5 0 10" fill="none" stroke="#e8eef8" stroke-width="1.3"/></svg>
<div style="position:absolute;left:1853.00px;top:1060.00px;font-size:12px;line-height:12px;font-family:'Liberation Sans',sans-serif;color:#fff;white-space:pre;transform:scaleX(0.9266);transform-origin:0 0;">11:48</div>
<div style="position:absolute;left:1906px;top:1051px;width:14px;height:29px;border:1px solid #0d2f68;border-right:none;background:linear-gradient(135deg,#9cbbe4,#4a7cc4 60%,#2c5ea8)"></div>
<div style="position:absolute;left:721px;top:341px;width:479px;height:369px;border:1px solid #e3ecf7;border-radius:7px 7px 6px 6px;background:linear-gradient(#c4d7ee 0%,#b4cbea 8%,#aec6e8 30%,#a9c2e5 100%);box-shadow:0 0 0 1px rgba(20,30,50,0.6)"></div>
<div style="position:absolute;left:724px;top:344px;width:300px;height:22px;background:radial-gradient(ellipse at 40% 50%,rgba(235,242,250,0.55),rgba(235,242,250,0) 70%)"></div>
<div style="position:absolute;left:728.30px;top:349.00px;font-size:12px;line-height:12px;font-family:'Liberation Sans',sans-serif;color:#1d2f45;white-space:pre;">Loudspeaker Parameters - Added Mass Method</div>
<div style="position:absolute;left:1147px;top:341px;width:47px;height:19px;border:1px solid #6f82a0;border-top:none;border-radius:0 0 4px 4px;background:linear-gradient(#b9cdea,#a8c0e2);box-shadow:inset 0 0 0 1px rgba(225,235,250,0.6)"></div>
<svg style="position:absolute;left:1160px;top:340px" width="24" height="20" viewBox="0 0 24 20">
<path d="M9 8l6 5M15 8l-6 5" stroke="#3a4760" stroke-width="4.4" stroke-linecap="square"/>
<path d="M9 8l6 5M15 8l-6 5" stroke="#f8f8f8" stroke-width="2.2" stroke-linecap="square"/></svg>
<div style="position:absolute;left:727px;top:369px;width:467px;height:335px;border:1px solid #5b6a7e;background:#f0f0f0"></div>
<div style="position:absolute;left:737px;top:381px;width:197px;height:314px;border:1px solid #abadb3;border-top-color:#9a9da3;background:#fff"></div>
<div style="position:absolute;left:917px;top:382px;width:16px;height:312px;background:linear-gradient(90deg,#e9e9e9,#f3f3f3 40%,#f0f0f0);border-left:1px solid #e6e6e6"></div>
<svg style="position:absolute;left:920px;top:387px" width="11" height="8"><path d="M1 6h8l-4-4z" fill="#a6a6a6"/></svg>
<svg style="position:absolute;left:920px;top:681px" width="11" height="8"><path d="M1 2h8l-4 4z" fill="#a6a6a6"/></svg>
<div style="position:absolute;left:742.20px;top:386.00px;font-size:11px;line-height:11px;font-family:'Liberation Sans',sans-serif;color:#111;white-space:pre;transform:scaleX(0.9619);transform-origin:0 0;">Thiele-Small parameters:</div>
<div style="position:absolute;left:742.20px;top:412.00px;font-size:11px;line-height:11px;font-family:'Liberation Sans',sans-serif;color:#111;white-space:pre;">Fs  = 44.12 Hz</div>
<div style="position:absolute;left:742.20px;top:425.00px;font-size:11px;line-height:11px;font-family:'Liberation Sans',sans-serif;color:#111;white-space:pre;transform:scaleX(1.0056);transform-origin:0 0;">Re  = 5.00 ohms[dc]</div>
<div style="position:absolute;left:742.20px;top:438.00px;font-size:11px;line-height:11px;font-family:'Liberation Sans',sans-serif;color:#111;white-space:pre;">Qt  = 0.25</div>
<div style="position:absolute;left:742.20px;top:451.00px;font-size:11px;line-height:11px;font-family:'Liberation Sans',sans-serif;color:#111;white-space:pre;">Qes = 0.27</div>
<div style="position:absolute;left:742.20px;top:464.00px;font-size:11px;line-height:11px;font-family:'Liberation Sans',sans-serif;color:#111;white-space:pre;">Qms = 3.44</div>
<div style="position:absolute;left:742.20px;top:477.00px;font-size:11px;line-height:11px;font-family:'Liberation Sans',sans-serif;color:#111;white-space:pre;transform:scaleX(0.9784);transform-origin:0 0;">Mms = 34.78 grams</div>
<div style="position:absolute;left:742.20px;top:490.00px;font-size:11px;line-height:11px;font-family:'Liberation Sans',sans-serif;color:#111;white-space:pre;transform:scaleX(0.9937);transform-origin:0 0;">Rms = 2.803408 kg/s</div>
<div style="position:absolute;left:742.20px;top:503.00px;font-size:11px;line-height:11px;font-family:'Liberation Sans',sans-serif;color:#111;white-space:pre;transform:scaleX(0.9852);transform-origin:0 0;">Cms = 0.000374 m/N</div>
<div style="position:absolute;left:742.20px;top:516.00px;font-size:11px;line-height:11px;font-family:'Liberation Sans',sans-serif;color:#111;white-space:pre;transform:scaleX(1.0156);transform-origin:0 0;">Vas = 21.25 liters</div>
<div style="position:absolute;left:742.20px;top:529.00px;font-size:11px;line-height:11px;font-family:'Liberation Sans',sans-serif;color:#111;white-space:pre;transform:scaleX(1.0306);transform-origin:0 0;">Sd= 201.06 cm^2</div>
<div style="position:absolute;left:742.20px;top:542.00px;font-size:11px;line-height:11px;font-family:'Liberation Sans',sans-serif;color:#111;white-space:pre;transform:scaleX(0.9832);transform-origin:0 0;">Bl  = 13.306369 Tm</div>
<div style="position:absolute;left:742.20px;top:555.00px;font-size:11px;line-height:11px;font-family:'Liberation Sans',sans-serif;color:#111;white-space:pre;transform:scaleX(1.0456);transform-origin:0 0;">ETA = 0.64 %</div>
<div style="position:absolute;left:742.20px;top:568.00px;font-size:11px;line-height:11px;font-family:'Liberation Sans',sans-serif;color:#111;white-space:pre;">Lp(2.83V/1m) = 92.24 dB</div>
<div style="position:absolute;left:742.20px;top:594.00px;font-size:11px;line-height:11px;font-family:'Liberation Sans',sans-serif;color:#111;white-space:pre;transform:scaleX(0.9764);transform-origin:0 0;">Added Mass Method:</div>
<div style="position:absolute;left:742.20px;top:607.00px;font-size:11px;line-height:11px;font-family:'Liberation Sans',sans-serif;color:#111;white-space:pre;transform:scaleX(0.9850);transform-origin:0 0;">Added mass = 30.00 grams</div>
<div style="position:absolute;left:742.20px;top:620.00px;font-size:11px;line-height:11px;font-family:'Liberation Sans',sans-serif;color:#111;white-space:pre;transform:scaleX(0.9934);transform-origin:0 0;">Diameter= 16.00 cm</div>
<div style="position:absolute;left:957px;top:388px;width:226px;height:135px;border:1px solid #d5dfe5;border-radius:3px;box-shadow:inset 1px 1px 0 #fff,1px 1px 0 #fff"></div>
<div style="position:absolute;left:961px;top:383px;width:58px;height:12px;background:#f0f0f0"></div>
<div style="position:absolute;left:964.50px;top:383.00px;font-size:11px;line-height:11px;font-family:'Liberation Sans',sans-serif;color:#111;white-space:pre;transform:scaleX(1.0286);transform-origin:0 0;">User Input</div>
<div style="position:absolute;left:970.50px;top:413.00px;font-size:11px;line-height:11px;font-family:'Liberation Sans',sans-serif;color:#111;white-space:pre;transform:scaleX(0.9510);transform-origin:0 0;">Voice coil Resistance (ohms)</div>
<div style="position:absolute;left:970.50px;top:450.00px;font-size:11px;line-height:11px;font-family:'Liberation Sans',sans-serif;color:#111;white-space:pre;transform:scaleX(0.9661);transform-origin:0 0;">Membrane diameter (cm)</div>
<div style="position:absolute;left:970.50px;top:486.00px;font-size:11px;line-height:11px;font-family:'Liberation Sans',sans-serif;color:#111;white-space:pre;transform:scaleX(0.9698);transform-origin:0 0;">Added mass (g)</div>
<div style="position:absolute;left:1114px;top:409px;width:50px;height:20px;border:1px solid #e3e9ef;border-top-color:#d0d6dc;background:#fff"></div>
<div style="position:absolute;left:1120.00px;top:414.00px;font-size:11px;line-height:11px;font-family:'Liberation Sans',sans-serif;color:#000;white-space:pre;">5</div>
<div style="position:absolute;left:1114px;top:442px;width:48px;height:22px;border:1px solid #e3e9ef;border-top-color:#d0d6dc;background:#fff"></div>
<div style="position:absolute;left:1120.60px;top:447.00px;font-size:11px;line-height:11px;font-family:'Liberation Sans',sans-serif;color:#000;white-space:pre;">16</div>
<div style="position:absolute;left:1115px;top:481px;width:48px;height:22px;border:1px solid #e3e9ef;border-top-color:#d0d6dc;background:#fff"></div>
<div style="position:absolute;left:1120.60px;top:486.00px;font-size:11px;line-height:11px;font-family:'Liberation Sans',sans-serif;color:#000;white-space:pre;">30</div>
<div style="position:absolute;left:965px;top:605px;width:109px;height:24px;border:1px solid #707070;border-radius:3px;background:linear-gradient(#f2f2f2 0%,#ebebeb 45%,#dddddd 50%,#cfcfcf 100%);box-shadow:inset 0 0 0 1px #fcfcfc"></div>
<div style="position:absolute;left:985.40px;top:612.00px;font-size:11px;line-height:11px;font-family:'Liberation Sans',sans-serif;color:#000;white-space:pre;transform:scaleX(0.9328);transform-origin:0 0;">Calculate TSP</div>
<div style="position:absolute;left:965px;top:642px;width:110px;height:21px;border:1px solid #707070;border-radius:3px;background:linear-gradient(#f2f2f2 0%,#ebebeb 45%,#dddddd 50%,#cfcfcf 100%);box-shadow:inset 0 0 0 1px #fcfcfc"></div>
<div style="position:absolute;left:975.00px;top:649.00px;font-size:11px;line-height:11px;font-family:'Liberation Sans',sans-serif;color:#000;white-space:pre;transform:scaleX(0.9702);transform-origin:0 0;">Export in .CSV file</div>
<div style="position:absolute;left:965px;top:673px;width:109px;height:21px;border:1px solid #707070;border-radius:3px;background:linear-gradient(#f2f2f2 0%,#ebebeb 45%,#dddddd 50%,#cfcfcf 100%);box-shadow:inset 0 0 0 1px #fcfcfc"></div>
<div style="position:absolute;left:975.20px;top:679.00px;font-size:11px;line-height:11px;font-family:'Liberation Sans',sans-serif;color:#000;white-space:pre;transform:scaleX(0.9801);transform-origin:0 0;">Copy to Clipboard</div>
<div style="position:absolute;left:1109px;top:639px;width:73px;height:21px;border:1px solid #707070;border-radius:3px;background:linear-gradient(#f2f2f2 0%,#ebebeb 45%,#dddddd 50%,#cfcfcf 100%);box-shadow:inset 0 0 0 1px #fcfcfc"></div>
<div style="position:absolute;left:1128.50px;top:645.00px;font-size:11px;line-height:11px;font-family:'Liberation Sans',sans-serif;color:#000;white-space:pre;transform:scaleX(0.9462);transform-origin:0 0;">Cancel</div>
<div style="position:absolute;left:1109px;top:673px;width:73px;height:21px;border:1px solid #707070;border-radius:3px;background:linear-gradient(#f2f2f2 0%,#ebebeb 45%,#dddddd 50%,#cfcfcf 100%);box-shadow:inset 0 0 0 1px #fcfcfc"></div>
<div style="position:absolute;left:1137.50px;top:679.00px;font-size:11px;line-height:11px;font-family:'Liberation Sans',sans-serif;color:#000;white-space:pre;transform:scaleX(0.9060);transform-origin:0 0;">OK</div>
</body></html>
